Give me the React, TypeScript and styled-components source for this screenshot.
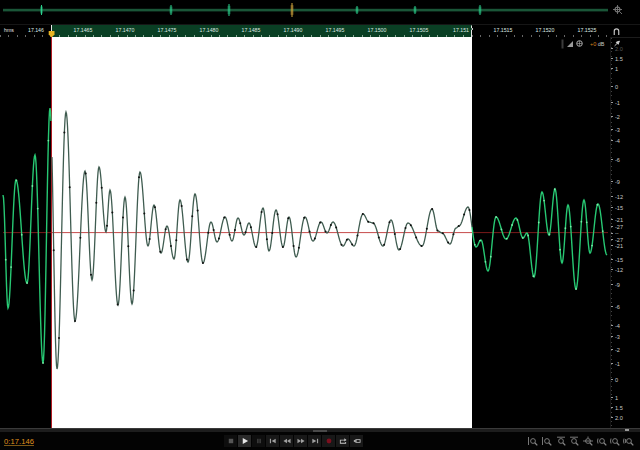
import React from "react";
import styled, { createGlobalStyle } from "styled-components";

const Global = createGlobalStyle`
  html, body { margin: 0; padding: 0; background: #000; overflow: hidden; }
  #root { width: 640px; height: 450px; }
`;

const Page = styled.div`
  width: 640px;
  height: 450px;
  background: #000;
  display: flex;
  flex-direction: column;
  font-family: "Liberation Sans", Arial, sans-serif;
  color: #ddd;
  overflow: hidden;
`;

const Overview = styled.div`
  height: 24px;
  flex: none;
  display: flex;
`;

const Ruler = styled.div`
  height: 13px;
  flex: none;
  display: flex;
  position: relative;
  border-top: 1px solid #161616;
  box-sizing: border-box;
`;

const RulerPart = styled.div<{ $w: number; $pad: number; $sel?: boolean }>`
  width: ${(p) => p.$w}px;
  flex: none;
  box-sizing: border-box;
  padding-left: ${(p) => p.$pad}px;
  display: flex;
  overflow: hidden;
  background-color: ${(p) => (p.$sel ? "#0a3f24" : "#000")};
  background-image: repeating-linear-gradient(
    90deg,
    ${(p) => (p.$sel ? "#8aa896" : "#666")} 0 1px,
    transparent 1px 8.4px
  );
  background-size: 100% 2px;
  background-repeat: no-repeat;
  background-position: 0 bottom;
`;

const RulerLabel = styled.span`
  width: 42px;
  flex: none;
  text-align: center;
  font-size: 5.2px;
  line-height: 10px;
  color: #dfe8e2;
  white-space: nowrap;
`;

const HmsLabel = styled.span`
  width: 24px;
  flex: none;
  font-size: 5.2px;
  line-height: 10px;
  color: #e4e4e4;
`;

const ClippedLabel = styled.span`
  flex: none;
  font-size: 5.2px;
  line-height: 10px;
  color: #dfe8e2;
  white-space: nowrap;
`;

const RulerCorner = styled.div`
  flex: 1;
  display: flex;
  align-items: center;
  padding-left: 4px;
  background: #000;
`;

const Playhead = styled.svg`
  position: absolute;
  left: 48px;
  top: 0;
`;

const SelectionHandle = styled.svg`
  position: absolute;
  left: 470px;
  top: 0;
`;

const Main = styled.div`
  height: 391px;
  flex: none;
  display: flex;
`;

const Canvas = styled.div`
  width: 608px;
  flex: none;
  display: flex;
  position: relative;
`;

const Outside = styled.div<{ $w: number }>`
  width: ${(p) => p.$w}px;
  flex: none;
  background: #000;
`;

const Selection = styled.div`
  width: 421px;
  flex: none;
  box-sizing: border-box;
  background: #fff;
  border-left: 1px solid #b01c24;
`;

const Wave = styled.svg`
  position: absolute;
  left: 0;
  top: 0;
`;

const LevelTools = styled.div`
  position: absolute;
  left: 561px;
  top: 2px;
  display: flex;
  align-items: center;
  gap: 3px;
  height: 10px;
`;

const Gain = styled.span`
  font-size: 5.5px;
  line-height: 10px;
  color: #c8c8c8;
  white-space: nowrap;
`;

const GainValue = styled.span`
  color: #d8801c;
`;

const DbColumn = styled.div`
  flex: 1;
  display: flex;
  flex-direction: column;
  border-top: 1px solid #1c1c1c;
  border-left: 1px solid #141414;
  box-sizing: border-box;
  margin-left: 2px;
  background-image: repeating-linear-gradient(
    180deg,
    #444 0 1px,
    transparent 1px 4.4px
  );
  background-size: 1px 100%;
  background-repeat: no-repeat;
  background-position: 0 0;
`;

const PinBox = styled.div`
  height: 10px;
  flex: none;
  display: flex;
  align-items: center;
  padding-left: 2px;
`;

const DbRow = styled.div<{ $h: number }>`
  height: ${(p) => p.$h}px;
  flex: none;
  display: flex;
  align-items: flex-start;
`;

const DbTick = styled.i`
  display: block;
  width: 2px;
  height: 1px;
  background: #999;
  flex: none;
`;

const DbLabel = styled.span<{ $dim?: boolean }>`
  margin-left: 2px;
  font-size: 5.6px;
  line-height: 0;
  padding-top: 0.5px;
  color: ${(p) => (p.$dim ? "#555" : "#c8c8c8")};
  white-space: nowrap;
`;

const ScrollStrip = styled.div`
  height: 4px;
  flex: none;
  background: #1d1d1d;
  border-top: 1px solid #3a3a3a;
  box-sizing: border-box;
  display: flex;
  justify-content: center;
  align-items: center;
  position: relative;
`;

const ScrollGrip = styled.div`
  width: 14px;
  height: 2px;
  background: #4a4a4a;
`;

const ScrollDot = styled.div`
  position: absolute;
  left: 625px;
  top: 0;
  width: 4px;
  height: 2px;
  background: #999;
`;

const Footer = styled.div`
  flex: 1;
  display: grid;
  grid-template-columns: 224px auto 1fr;
  align-items: center;
  background: #030303;
`;

const Clock = styled.div`
  padding-left: 4px;
  font-size: 7.6px;
  color: #e0921e;
  text-decoration: underline;
  text-decoration-color: #7d5816;
  letter-spacing: 0.05px;
`;

const Transport = styled.div`
  display: flex;
  gap: 1px;
`;

const TransportButton = styled.div<{ $bg?: string }>`
  width: 13px;
  height: 12px;
  flex: none;
  display: flex;
  align-items: center;
  justify-content: center;
  background: ${(p) => p.$bg ?? "#0e0e0e"};
`;

const ZoomTools = styled.div`
  display: flex;
  justify-content: flex-end;
  padding-right: 5px;
  gap: 1.7px;
`;

const ZoomButton = styled.div`
  width: 12px;
  height: 12px;
  flex: none;
  display: flex;
  align-items: center;
  justify-content: center;
`;

const EXT: [number, number][] = [
  [3, 195], [8, 308], [16, 180], [27, 283], [35, 155], [43, 363], [50, 108], [57, 369],
  [66, 112], [75, 321], [85, 171], [92, 280], [99, 167], [106, 232], [110, 190], [118, 305],
  [125, 197], [132, 304], [140, 172], [148, 246], [154, 205], [161, 253], [167, 226], [174, 259],
  [180, 200], [188, 262], [195, 194], [203, 263], [211, 222], [217, 242], [225, 217], [232, 241],
  [238, 218], [244, 235], [249, 223], [256, 247], [263, 208], [269, 251], [276, 210], [283, 247],
  [289, 217], [296, 257], [305, 217], [313, 241], [321, 222], [327, 233], [333, 222], [343, 246],
  [348, 239], [354, 246], [363, 214], [369, 222], [373, 223], [383, 246], [391, 220], [399, 250],
  [408, 223], [422, 246], [432, 209], [438, 231], [442, 233], [450, 244], [456, 228], [459, 226], [468, 207],
  [476, 247], [481, 240], [488, 271], [496, 217], [506, 239], [516, 218], [523, 238], [527, 233],
  [534, 277], [542, 192], [549, 235], [555, 189], [562, 263], [568, 205], [576, 289], [584, 200],
  [590, 253], [598, 204], [607, 255],
];

function yAt(x: number): number {
  for (let i = 0; i < EXT.length - 1; i++) {
    const [x0, y0] = EXT[i];
    const [x1, y1] = EXT[i + 1];
    if (x >= x0 && x <= x1) {
      const t = (x - x0) / (x1 - x0);
      return y0 + ((y1 - y0) * (1 - Math.cos(Math.PI * t))) / 2;
    }
  }
  return EXT[EXT.length - 1][1];
}

const TOP = 37;

function slice(from: number, to: number): string {
  const pts: string[] = [];
  for (let x = from; x <= to; x += 0.5) pts.push(`${x},${(yAt(x) - TOP).toFixed(2)}`);
  return pts.join(" ");
}

const dots: number[] = [];
for (let x = 53.7 - 5.33 * 9; x < 607; x += 5.33) dots.push(x);

const SPIKES: [number, string, number][] = [
  [41.5, "#2ad08c", 5],
  [171, "#2ad08c", 5],
  [229, "#2ad08c", 6],
  [292, "#d8a83c", 7],
  [357, "#2ad08c", 4],
  [415, "#2ad08c", 4],
  [480, "#2ad08c", 5],
];

const NAMES_SEL = ["17.1465", "17.1470", "17.1475", "17.1480", "17.1485", "17.1490", "17.1495", "17.1500", "17.1505", "17.151"];
const NAMES_RIGHT = ["17.1515", "17.1520", "17.1525"];

const DB: [string, number][] = [
  ["2.0", 48], ["1.5", 58], ["1", 68], ["0", 86], ["-1", 102], ["-2", 116], ["-3", 129], ["-4", 140],
  ["-6", 159], ["-9", 181], ["-12", 196], ["-15", 207], ["-21", 219], ["-27", 226], ["--", 232.5],
  ["-27", 239], ["-21", 245], ["-15", 259], ["-12", 269], ["-9", 284], ["-6", 306], ["-4", 325],
  ["-3", 336], ["-2", 349], ["-1", 363], ["0", 379], ["1", 397], ["1.5", 407], ["2.0", 417], ["", 428],
];

const Ico = ({ children }: { children: React.ReactNode }) => (
  <svg width={8} height={8} viewBox="0 0 9 9" fill="#a0a0a0">
    {children}
  </svg>
);

const TRANSPORT: { bg?: string; icon: React.ReactNode }[] = [
  { icon: <Ico><rect x="2" y="2" width="5" height="5" fill="#555" /></Ico> },
  { bg: "#2a2a2a", icon: <Ico><path d="M2 1 L8 4.5 L2 8Z" fill="#e8e8e8" /></Ico> },
  { icon: <Ico><rect x="2.5" y="2" width="1.5" height="5" fill="#444" /><rect x="5" y="2" width="1.5" height="5" fill="#444" /></Ico> },
  { bg: "#181818", icon: <Ico><rect x="1" y="2" width="1.3" height="5" /><path d="M7.5 2 L3 4.5 L7.5 7Z" /></Ico> },
  { bg: "#181818", icon: <Ico><path d="M4.5 2 L0.5 4.5 L4.5 7Z" /><path d="M8.5 2 L4.5 4.5 L8.5 7Z" /></Ico> },
  { bg: "#181818", icon: <Ico><path d="M0.5 2 L4.5 4.5 L0.5 7Z" /><path d="M4.5 2 L8.5 4.5 L4.5 7Z" /></Ico> },
  { bg: "#181818", icon: <Ico><path d="M1.5 2 L6 4.5 L1.5 7Z" /><rect x="6.7" y="2" width="1.3" height="5" /></Ico> },
  { bg: "#181818", icon: <Ico><circle cx="4.5" cy="4.5" r="2.7" fill="#7c0f1e" /></Ico> },
  { bg: "#181818", icon: <Ico><path d="M1 3 H6 V1.5 L8.5 3.5 L6 5 V4 H2 V6.5 H7 V5.5 H8 V7.5 H1Z" fill="#c8c8c8" /></Ico> },
  { bg: "#181818", icon: <Ico><path d="M0.5 4.5 L3 2.5 V6.5Z" fill="#c8c8c8" /><rect x="3.5" y="3" width="4.5" height="3" fill="none" stroke="#c8c8c8" strokeWidth="0.9" /></Ico> },
];

const Lens = ({ children }: { children?: React.ReactNode }) => (
  <svg width={12} height={11} viewBox="0 0 12 11" fill="none" stroke="#858585" strokeWidth="0.9">
    <circle cx="6" cy="5" r="2.4" />
    <path d="M7.8 6.8 L10.3 9.4" strokeWidth="1.3" />
    {children}
  </svg>
);

const ZOOMS: React.ReactNode[] = [
  <path key="a" d="M1.5 1 V9" />,
  <path key="b" d="M1.5 1 V9" />,
  <path key="c" d="M2 1.2 H10" />,
  <path key="d" d="M2 1.2 H10" />,
  <path key="e" d="M1 5 H11 M6 0.5 V2" />,
  <path key="f" d="M2 2.5 Q1 5 2 7.5" />,
  <path key="g" d="M2 2.5 Q1 5 2 7.5" />,
  <path key="h" d="M1 2.5 Q0 5 1 7.5 M2.7 3 Q2 5 2.7 7" />,
];

export default function App() {
  return (
    <Page>
      <Global />
      <Overview>
        <svg width={640} height={24}>
          <rect x="3" y="8.8" width="605" height="2.6" fill="#1a5638" />
          {SPIKES.map(([x, c, h]) => (
            <g key={x}>
              <rect x={x - 1.5} y={10 - h * 0.7} width="3" height={h * 1.4} fill={c} opacity="0.4" />
              <rect x={x - 0.5} y={10 - h} width="1" height={h * 2} fill={c} />
            </g>
          ))}
          <circle cx="617.5" cy="9.5" r="2.6" fill="none" stroke="#909090" strokeWidth="1" />
          <path d="M617.5 5 V14 M613 9.5 H622 M619.5 11.5 L622 14" stroke="#7a7a7a" strokeWidth="0.9" />
        </svg>
      </Overview>

      <Ruler>
        <RulerPart $w={51} $pad={4}>
          <HmsLabel>hms</HmsLabel>
          <ClippedLabel>17.146</ClippedLabel>
        </RulerPart>
        <RulerPart $w={421} $sel $pad={11}>
          {NAMES_SEL.map((n) => (
            <RulerLabel key={n}>{n}</RulerLabel>
          ))}
        </RulerPart>
        <RulerPart $w={136} $pad={10}>
          {NAMES_RIGHT.map((n) => (
            <RulerLabel key={n}>{n}</RulerLabel>
          ))}
        </RulerPart>
        <RulerCorner>
          <svg width={9} height={9} viewBox="0 0 12 11" fill="none" stroke="#c4c4c4" strokeWidth="1.6">
            <path d="M3 10 V5 A3 3 0 0 1 9 5 V10" />
          </svg>
        </RulerCorner>
        <Playhead width={8} height={13}>
          <rect x="3" y="0" width="1" height="7" fill="#e8e8e8" />
          <path d="M0.7 6 H6.5 V9.5 L3.6 12.5 L0.7 9.5Z" fill="#e6b422" />
        </Playhead>
        <SelectionHandle width={5} height={13}>
          <path d="M1.5 0.5 V3 L3 4 L1.5 5 V12" fill="none" stroke="#e8e8e8" strokeWidth="1" />
        </SelectionHandle>
      </Ruler>

      <Main>
        <Canvas>
          <Outside $w={51} />
          <Selection />
          <Outside $w={136} />
          <Wave width={608} height={391}>
            <path d={`M3 ${232.6 - TOP} H51`} stroke="#7a1a1a" strokeWidth="1" />
            <path d={`M52 ${232.6 - TOP} H472`} stroke="#c64a4a" strokeWidth="1" />
            <path d={`M472 ${232.6 - TOP} H608`} stroke="#7a1a1a" strokeWidth="1" />
            <polyline points={slice(3, 51)} fill="none" stroke="#27c873" strokeWidth="1.4" />
            <polyline points={slice(472, 607)} fill="none" stroke="#27c873" strokeWidth="1.4" />
            <polyline points={slice(52, 472)} fill="none" stroke="#3f5c50" strokeWidth="1.3" />
            {dots.map((x) => {
              const inSel = x > 51.5 && x < 472;
              return (
                <circle
                  key={x}
                  cx={x}
                  cy={yAt(x) - TOP}
                  r={inSel ? 1 : 0.9}
                  fill={inSel ? "#101010" : "#78eaa6"}
                />
              );
            })}
          </Wave>
          <LevelTools>
            <svg width={26} height={10} viewBox="0 0 26 10">
              <rect x="0.5" y="0.5" width="2" height="9" fill="#3a3a3a" />
              <path d="M6 8 L12 2 V8Z" fill="#9a9a9a" />
              <circle cx="18.5" cy="4.5" r="2.8" fill="none" stroke="#b0b0b0" strokeWidth="1" />
              <path d="M18.5 2 V7 M16 4.5 H21" stroke="#b0b0b0" strokeWidth="0.6" />
            </svg>
            <Gain>
              <GainValue>+0</GainValue> dB
            </Gain>
          </LevelTools>
        </Canvas>
        <DbColumn>
          <PinBox>
            <svg width={8} height={9} viewBox="0 0 10 10" fill="none" stroke="#cfcfcf" strokeWidth="1.2">
              <path d="M2 8 L5 5" />
              <path d="M4 3.5 L6.5 6 L8 2Z" fill="#cfcfcf" />
            </svg>
          </PinBox>
          {DB.slice(0, -1).map(([label, y], i) => (
            <DbRow key={`${label}${y}`} $h={DB[i + 1][1] - y}>
              <DbTick />
              <DbLabel $dim={i === 0}>{label}</DbLabel>
            </DbRow>
          ))}
        </DbColumn>
      </Main>

      <ScrollStrip>
        <ScrollGrip />
        <ScrollDot />
      </ScrollStrip>

      <Footer>
        <Clock>0:17.146</Clock>
        <Transport>
          {TRANSPORT.map((b, i) => (
            <TransportButton key={i} $bg={b.bg}>
              {b.icon}
            </TransportButton>
          ))}
        </Transport>
        <ZoomTools>
          {ZOOMS.map((z, i) => (
            <ZoomButton key={i}>
              <Lens>{z}</Lens>
            </ZoomButton>
          ))}
        </ZoomTools>
      </Footer>
    </Page>
  );
}
